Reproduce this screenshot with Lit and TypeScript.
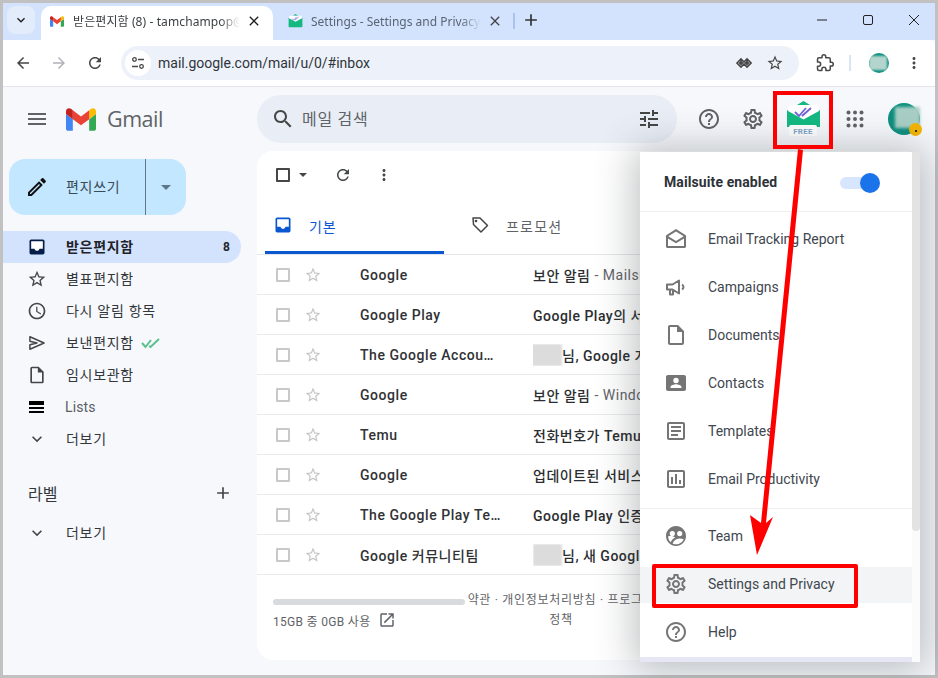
import { LitElement, html, css, svg } from "lit";
import { customElement } from "lit/decorators.js";

const P = {
  menu: "M3 18h18v-2H3v2zm0-5h18v-2H3v2zm0-7v2h18V6H3z",
  search: "M15.5 14h-.79l-.28-.27C15.41 12.59 16 11.11 16 9.5 16 5.91 13.09 3 9.5 3S3 5.91 3 9.5 5.91 16 9.5 16c1.61 0 3.09-.59 4.23-1.57l.27.28v.79l5 4.99L20.49 19l-4.99-5zm-6 0C7.01 14 5 11.99 5 9.5S7.01 5 9.5 5 14 7.01 14 9.5 11.99 14 9.5 14z",
  tune: "M3 17v2h6v-2H3zM3 5v2h10V5H3zm10 16v-2h8v-2h-8v-2h-2v6h2zM7 9v2H3v2h4v2h2V9H7zm14 4v-2H11v2h10zm-6-4h2V7h4V5h-4V3h-2v6z",
  help: "M11 18h2v-2h-2v2zm1-16C6.48 2 2 6.48 2 12s4.48 10 10 10 10-4.48 10-10S17.52 2 12 2zm0 18c-4.41 0-8-3.59-8-8s3.59-8 8-8 8 3.59 8 8-3.59 8-8 8zm0-14c-2.21 0-4 1.79-4 4h2c0-1.1.9-2 2-2s2 .9 2 2c0 2-3 1.75-3 5h2c0-2.25 3-2.5 3-5 0-2.21-1.79-4-4-4z",
  gear: "M19.43 12.98c.04-.32.07-.64.07-.98 0-.34-.03-.66-.07-.98l2.11-1.65c.19-.15.24-.42.12-.64l-2-3.46c-.09-.16-.26-.25-.44-.25-.06 0-.12.01-.17.03l-2.49 1c-.52-.4-1.08-.73-1.69-.98l-.38-2.65C14.46 2.18 14.25 2 14 2h-4c-.25 0-.46.18-.49.42l-.38 2.65c-.61.25-1.17.59-1.69.98l-2.49-1c-.06-.02-.12-.03-.18-.03-.17 0-.34.09-.43.25l-2 3.46c-.13.22-.07.49.12.64l2.11 1.65c-.04.32-.07.65-.07.98 0 .33.03.66.07.98l-2.11 1.65c-.19.15-.24.42-.12.64l2 3.46c.09.16.26.25.44.25.06 0 .12-.01.17-.03l2.49-1c.52.4 1.08.73 1.69.98l.38 2.65c.03.24.24.42.49.42h4c.25 0 .46-.18.49-.42l.38-2.65c.61-.25 1.17-.59 1.69-.98l2.49 1c.06.02.12.03.18.03.17 0 .34-.09.43-.25l2-3.46c.12-.22.07-.49-.12-.64l-2.11-1.65zm-1.98-1.71c.04.31.05.52.05.73 0 .21-.02.43-.05.73l-.14 1.13.89.7 1.08.84-.7 1.21-1.27-.51-1.04-.42-.9.68c-.43.32-.84.56-1.25.73l-1.06.43-.16 1.13-.2 1.35h-1.4l-.19-1.35-.16-1.13-1.06-.43c-.43-.18-.83-.41-1.23-.71l-.91-.7-1.06.43-1.27.51-.7-1.21 1.08-.84.89-.7-.14-1.13c-.03-.31-.05-.54-.05-.74s.02-.43.05-.73l.14-1.13-.89-.7-1.08-.84.7-1.21 1.27.51 1.04.42.9-.68c.43-.32.84-.56 1.25-.73l1.06-.43.16-1.13.2-1.35h1.39l.19 1.35.16 1.13 1.06.43c.43.18.83.41 1.23.71l.91.7 1.06-.43 1.27-.51.7 1.21-1.07.85-.89.7.14 1.13zM12 8c-2.21 0-4 1.79-4 4s1.79 4 4 4 4-1.79 4-4-1.79-4-4-4zm0 6c-1.1 0-2-.9-2-2s.9-2 2-2 2 .9 2 2-.9 2-2 2z",
  star: "M22 9.24l-7.19-.62L12 2 9.19 8.63 2 9.24l5.46 4.73L5.82 21 12 17.27 18.18 21l-1.63-7.03L22 9.24zM12 15.4l-3.76 2.27 1-4.28-3.32-2.88 4.38-.38L12 6.1l1.71 4.04 4.38.38-3.32 2.88 1 4.28L12 15.4z",
  clock: "M11.99 2C6.47 2 2 6.48 2 12s4.47 10 9.99 10C17.52 22 22 17.52 22 12S17.52 2 11.99 2zM12 20c-4.42 0-8-3.58-8-8s3.58-8 8-8 8 3.58 8 8-3.58 8-8 8zm.5-13H11v6l5.25 3.15.75-1.23-4.5-2.67z",
  file: "M14 2H6c-1.1 0-1.99.9-1.99 2L4 20c0 1.1.89 2 1.99 2H18c1.1 0 2-.9 2-2V8l-6-6zm4 18H6V4h7v5h5v11z",
  expand: "M16.59 8.59L12 13.17 7.41 8.59 6 10l6 6 6-6z",
  add: "M19 13h-6v6h-2v-6H5v-2h6V5h2v6h6v2z",
  pencil: "M3 17.25V21h3.75L17.81 9.94l-3.75-3.75L3 17.25zM5.92 19H5v-.92l9.06-9.06.92.92L5.92 19zM20.71 5.63l-2.34-2.34c-.2-.2-.45-.29-.71-.29s-.51.1-.7.29l-1.83 1.83 3.75 3.75 1.83-1.83c.39-.39.39-1.02 0-1.41z",
  refresh: "M17.65 6.35C16.2 4.9 14.21 4 12 4c-4.42 0-7.99 3.58-7.99 8s3.57 8 7.99 8c3.73 0 6.84-2.55 7.73-6h-2.08c-.82 2.33-3.04 4-5.65 4-3.31 0-6-2.69-6-6s2.69-6 6-6c1.66 0 3.14.69 4.22 1.78L13 11h7V4l-2.35 2.35z",
  more: "M12 8c1.1 0 2-.9 2-2s-.9-2-2-2-2 .9-2 2 .9 2 2 2zm0 2c-1.1 0-2 .9-2 2s.9 2 2 2 2-.9 2-2-.9-2-2-2zm0 6c-1.1 0-2 .9-2 2s.9 2 2 2 2-.9 2-2-.9-2-2-2z",
  open: "M19 19H5V5h7V3H5c-1.11 0-2 .9-2 2v14c0 1.1.89 2 2 2h14c1.1 0 2-.9 2-2v-7h-2v7zM14 3v2h3.59l-9.83 9.83 1.41 1.41L19 6.41V10h2V3h-7z",
  chart: "M9 17H7v-7h2v7zm4 0h-2V7h2v10zm4 0h-2v-4h2v4zm2 2H5V5h14v14zm0-16H5c-1.1 0-2 .9-2 2v14c0 1.1.9 2 2 2h14c1.1 0 2-.9 2-2V5c0-1.1-.9-2-2-2z",
  article: "M14 17H7v-2h7v2zm3-4H7v-2h10v2zm0-4H7V7h10v2zM19 5v14H5V5h14m0-2H5c-1.1 0-2 .9-2 2v14c0 1.1.9 2 2 2h14c1.1 0 2-.9 2-2V5c0-1.1-.9-2-2-2z",
  back: "M20 11H7.83l5.59-5.59L12 4l-8 8 8 8 1.41-1.41L7.83 13H20v-2z",
  forward: "M12 4l-1.41 1.41L16.17 11H4v2h12.17l-5.58 5.59L12 20l8-8z",
  envelope: "M12 2 2.2 8.2C2.1 8.3 2 8.5 2 8.7V19.5c0 .8.7 1.5 1.5 1.5h17c.8 0 1.5-.7 1.5-1.5V8.7c0-.2-.1-.4-.2-.5L12 2zm0 2.4 7.7 4.8L12 13.9 4.3 9.2 12 4.4zM4 19V11.4l8 4.9 8-4.9V19H4z",
  contact: "M20 4H4c-1.1 0-2 .9-2 2v12c0 1.1.9 2 2 2h16c1.1 0 2-.9 2-2V6c0-1.1-.9-2-2-2zm-8 2.8a2.7 2.7 0 1 1 0 5.4 2.7 2.7 0 0 1 0-5.4zM17.5 17h-11v-.9c0-1.8 3.7-2.8 5.5-2.8s5.5 1 5.5 2.8v.9z",
  team: "M12 2C6.48 2 2 6.48 2 12s4.48 10 10 10 10-4.48 10-10S17.52 2 12 2zM8.3 7a2.6 2.6 0 1 1 0 5.2A2.6 2.6 0 0 1 8.3 7zm7.4 0a2.6 2.6 0 1 1 0 5.2 2.6 2.6 0 0 1 0-5.2zM4 12.6c1.2-.5 2.9-.6 4.3-.4 1.2.1 2.3.6 3 1.2-1.9.8-3.7 2.5-4.6 4.8A8 8 0 0 1 4 12.6zm4.6 6.8c1-2.4 3.4-4.5 6.6-4.8 1.6-.1 3.2.1 4.6.7A8 8 0 0 1 8.6 19.4z",
  chev: "M7.41 8.59L12 13.17l4.59-4.58L18 10l-6 6-6-6z",
  close: "M19 6.41 17.59 5 12 10.59 6.41 5 5 6.41 10.59 12 5 17.59 6.41 19 12 13.41 17.59 19 19 17.59 13.41 12z",
  puzzle: "M20.5 11H19V7c0-1.1-.9-2-2-2h-4V3.5C13 2.12 11.88 1 10.5 1S8 2.12 8 3.5V5H4c-1.1 0-1.99.9-1.99 2v3.8H3.5c1.49 0 2.7 1.21 2.7 2.7s-1.21 2.7-2.7 2.7H2V20c0 1.1.9 2 2 2h3.8v-1.5c0-1.49 1.21-2.7 2.7-2.7 1.49 0 2.7 1.21 2.7 2.7V22H17c1.1 0 2-.9 2-2v-4h1.5c1.38 0 2.5-1.12 2.5-2.5S21.88 11 20.5 11z",
};

const S = {
  send: "M3.500 4.500 L20.500 12 L3.500 19.500 L3.500 14 L12 12 L3.500 10 Z",
  campaign: "M3 9.500h5.500L15 5.500v13L8.500 14.500H3z M6 15v4.500h3V15 M18 9.500c1 .6 1.500 1.500 1.500 2.500s-.5 1.900-1.500 2.500",
};

const ic = (d: string, size: number, color = "#444746") =>
  html`<svg class="ic" width=${size} height=${size} viewBox="0 0 24 24" fill=${color}><path d=${d}></path></svg>`;

const stroked = (d: string, size: number, color: string, w = 2) =>
  html`<svg class="ic" width=${size} height=${size} viewBox="0 0 24 24" fill="none" stroke=${color} stroke-width=${w} stroke-linejoin="round"><path d=${d}></path></svg>`;

const inboxIc = (size: number, color: string) =>
  html`<svg class="ic" width=${size} height=${size} viewBox="0 0 24 24"><rect x="3" y="3" width="18" height="18" rx="2" fill=${color}></rect><path fill="#fff" d="M5 5.200h14V14h-4c-.3 1.500-1.500 2.500-3 2.500S9.300 15.500 9 14H5z"></path></svg>`;

const gmailLogo = (w: number, h: number) =>
  html`<svg class="ic" width=${w} height=${h} viewBox="52 42 88 66"><path fill="#4285f4" d="M58 108h14V74L52 59v43c0 3.32 2.69 6 6 6"></path><path fill="#34a853" d="M120 108h14c3.32 0 6-2.69 6-6V59l-20 15"></path><path fill="#fbbc04" d="M120 48v26l20-15v-8c0-7.42-8.47-11.65-14.4-7.2"></path><path fill="#ea4335" d="M72 74V48l24 18 24-18v26L96 92"></path><path fill="#c5221f" d="M52 51v8l20 15V48l-5.6-4.2c-5.94-4.45-14.4-.22-14.4 7.2"></path></svg>`;

const mailsuite = (w: number, h: number, badge: boolean) =>
  html`<svg class="ic" width=${w} height=${h} viewBox="0 0 33 36">
    <path fill="#13b981" d="M16.500 0 L23 4 H10 Z"></path>
    <path fill="#13b981" d="M0 9 L16.500 17 L33 9 V26 H0 Z"></path>
    <path fill="#fff" d="M1 8 Q1 4 5 4 H28 Q32 4 32 8 V10 L16.500 18.500 L1 10 Z"></path>
    <path fill="none" stroke="#6f63d8" stroke-width="1.800" d="M8 11 l4 4 L19 7 M15 15 L24 7"></path>
    ${badge
      ? svg`<rect x="2" y="24" width="28" height="11" rx="2" fill="#fff"></rect>
            <text class="freetxt" x="16" y="32.500" text-anchor="middle">FREE</text>`
      : svg`<rect x="0" y="24" width="33" height="8" rx="2" fill="#13b981"></rect>`}
  </svg>`;

const nav = [
  { t: "받은편지함", d: "", sel: true, n: "8" },
  { t: "별표편지함", d: P.star },
  { t: "다시 알림 항목", d: P.clock },
  { t: "보낸편지함", d: "send", check: true },
  { t: "임시보관함", d: P.file },
  { t: "Lists", d: "lists", latin: true },
  { t: "더보기", d: P.expand },
];

const rows = [
  { from: "Google", subj: "보안 알림", snip: " - Mailsuite" },
  { from: "Google Play", subj: "Google Play의 서비스 약관", snip: "" },
  { from: "The Google Accou…", blur: "wide", subj: "님, Google 계정", snip: "" },
  { from: "Google", subj: "보안 알림", snip: " - Windows" },
  { from: "Temu", subj: "전화번호가 Temu", snip: "" },
  { from: "Google", subj: "업데이트된 서비스 약관", snip: "" },
  { from: "The Google Play Te…", subj: "Google Play 인증", snip: "" },
  { from: "Google 커뮤니티팀", blur: "narrow", subj: "님, 새 Google", snip: "" },
];

const menuA = [
  { t: "Email Tracking Report", d: P.envelope },
  { t: "Campaigns", d: "campaign" },
  { t: "Documents", d: P.file },
  { t: "Contacts", d: P.contact },
  { t: "Templates", d: P.article },
  { t: "Email Productivity", d: P.chart },
];
const menuB = [
  { t: "Team", d: P.team },
  { t: "Settings and Privacy", d: P.gear, hover: true },
  { t: "Help", d: P.help },
];

@customElement("app-root")
export class AppRoot extends LitElement {
  static styles = css`
    :host {
      display: block;
      position: relative;
      width: 938px;
      height: 678px;
      box-sizing: border-box;
      padding: 3px;
      background: #c1c1c1;
      overflow: hidden;
      font-family: "Roboto", "Noto Sans CJK KR", sans-serif;
      color: #202124;
    }
    .ic { display: block; flex: none; }
    .freetxt { font-family: "Roboto", sans-serif; font-size: 8px; font-weight: 700; fill: #7fa6cc; letter-spacing: .3px; }
    .window { height: 100%; display: flex; flex-direction: column; background: #f6f8fc; overflow: hidden; }

    /* tab strip */
    .tabs { height: 37px; flex: none; background: #d3e3fd; display: flex; align-items: flex-end; padding-left: 4px; box-sizing: border-box; font-family: "Noto Sans", "Noto Sans CJK KR", sans-serif; }
    .tabsearch { width: 28px; height: 28px; margin-bottom: 6px; border-radius: 8px; background: #e3ecfb; display: flex; align-items: center; justify-content: center; }
    .tab { height: 34px; display: flex; align-items: center; box-sizing: border-box; font-size: 12px; position: relative; }
    .tab.active { width: 232px; margin-left: 6px; background: #fff; border-radius: 10px 10px 0 0; padding: 0 11px 4px 9px; color: #3c4043; }
    .tab.other { width: 223px; margin-left: 7px; padding: 0 0 4px 7px; color: #5a6472; }
    .tab .title { flex: 1; min-width: 0; margin-left: 9px; white-space: nowrap; overflow: hidden; letter-spacing: .1px; -webkit-mask-image: linear-gradient(90deg, #000 88%, transparent); mask-image: linear-gradient(90deg, #000 88%, transparent); }
    .tab.other .title { margin-left: 7px; letter-spacing: 0; }
    .tabclose { margin-left: 6px; }
    .tabsep { width: 2px; height: 16px; margin: 0 0 11px 10px; background: #a8c4ec; align-self: flex-end; }
    .newtab { margin: 0 0 10px 6px; }
    .winctl { margin-left: auto; display: flex; align-items: center; align-self: flex-start; margin-top: 11px; }
    .winbtn { width: 46px; display: flex; justify-content: center; }
    .winbtn.last { margin-right: -2px; }

    /* toolbar */
    .toolbar { height: 47px; flex: none; background: #fff; border-bottom: 1px solid #e3e5e8; box-sizing: border-box; border-top-right-radius: 6px; display: flex; align-items: center; padding-left: 2px; }
    .tb { width: 36px; display: flex; justify-content: center; }
    .omni { width: 678px; height: 34px; margin-left: 8px; border-radius: 17px; background: #edf2fa; display: flex; align-items: center; padding: 0 15px 0 4px; box-sizing: border-box; }
    .omni .tune { width: 26px; height: 26px; border-radius: 50%; background: #fff; display: flex; align-items: center; justify-content: center; }
    .url { flex: 1; margin-left: 7px; font-size: 14px; color: #30343a; }
    .omni .gap { width: 14px; }
    .ext { margin-left: 10px; width: 32px; display: flex; justify-content: center; }
    .tbsep { width: 2px; height: 16px; background: #d9e4f4; margin: 0 18px 0 8px; }
    .tbavatar { width: 20px; height: 20px; border-radius: 50%; background: #0e8f7f; position: relative; overflow: hidden; }
    .tbavatar::after { content: ""; position: absolute; left: 0; right: 2px; top: 3px; bottom: 3px; background: #b4d5cd; filter: blur(1px); }
    .tbmore { margin-left: 16px; }

    /* gmail header */
    .header { height: 64px; flex: none; display: flex; align-items: center; position: relative; }
    .hleft { width: 254px; flex: none; display: flex; align-items: center; padding-left: 22px; box-sizing: border-box; }
    .logo { margin-left: 17px; }
    .wordmark { margin: -2px 0 0 11px; font-family: "Open Sans", "Roboto", sans-serif; font-size: 21.500px; color: #5f6368; letter-spacing: -.5px; }
    .search { width: 420px; height: 48px; border-radius: 24px; background: #e9eef6; display: flex; align-items: center; padding: 0 16px 0 14px; box-sizing: border-box; }
    .search .ph { flex: 1; margin: -2px 0 0 7px; font-size: 16px; color: #5f6368; letter-spacing: .7px; }
    .hright { display: flex; align-items: center; margin-left: 20px; }
    .hbtn { width: 24px; display: flex; justify-content: center; }
    .hbtn + .hbtn { margin-left: 20px; }
    .hms { margin-left: 22px; }
    .happs { margin-left: 23px; }
    .havatar { margin-left: 21px; width: 32px; height: 32px; border-radius: 50%; background: #0e8f7f; position: relative; }
    .havatar .blur { position: absolute; left: 7px; top: 4px; width: 25px; height: 21px; background: #a9cfc5; filter: blur(1.500px); }
    .havatar .dot { position: absolute; right: -2px; bottom: -1px; width: 13px; height: 13px; border-radius: 50%; background: #f4b400; display: flex; align-items: center; justify-content: center; }
    .havatar .dot::after { content: ""; width: 2px; height: 2px; background: #333; margin-top: 3px; }

    .body { flex: 1; min-height: 0; display: flex; }

    /* sidebar */
    .side { width: 254px; flex: none; color: #202124; }
    .compose { margin: 8px 0 0 6px; width: 177px; height: 56px; background: #c2e7ff; border-radius: 16px; display: flex; align-items: center; box-sizing: border-box; }
    .compose .main { width: 137px; flex: none; height: 100%; display: flex; align-items: center; padding-left: 16px; box-sizing: border-box; border-right: 1px solid #5f7787; }
    .compose .lbl { margin: -2px 0 0 17px; font-size: 14px; color: #3a4a54; letter-spacing: .7px; }
    .compose .drop { flex: 1; display: flex; justify-content: center; }
    .caret { width: 0; height: 0; border-left: 5px solid transparent; border-right: 5px solid transparent; border-top: 5px solid #5f7787; }
    .navlist { margin-top: 16px; width: 238px; }
    .nav { height: 32px; display: flex; align-items: center; padding-left: 24px; box-sizing: border-box; font-size: 14px; color: #33373b; }
    .nav.sel { background: #d3e3fd; border-radius: 0 16px 16px 0; font-weight: 700; color: #1f2329; }
    .nav .t { margin: -2px 0 0 19px; letter-spacing: .7px; }
    .nav .t.latin { margin: 0 0 0 18px; color: #5b5f63; letter-spacing: .1px; }
    .nav .n { margin-left: auto; margin-right: 11px; font-size: 12px; font-weight: 700; }
    .nav .checks { margin-left: 7px; }
    .labels { margin-top: 22px; height: 32px; display: flex; align-items: center; justify-content: space-between; padding: 0 8px 0 25px; box-sizing: border-box; font-size: 16px; width: 238px; color: #33373b; }
    .navmore { margin-top: 8px; }
    .lists { width: 15px; margin: 0 3px 0 2px; display: flex; flex-direction: column; gap: 2px; }
    .lists i { display: block; height: 2px; background: #000; }
    .lists i:first-child { height: 4px; }

    /* main */
    .panel { width: 663px; height: 509px; flex: none; background: #fff; border-radius: 16px; position: relative; overflow: hidden; }
    .actions { height: 48px; display: flex; align-items: center; padding-left: 19px; box-sizing: border-box; }
    .cb { width: 14px; height: 14px; box-sizing: border-box; border-radius: 1px; border: 2px solid #c9c9c9; flex: none; }
    .actions .cb { border-color: #444746; }
    .actions .caret { margin-left: 9px; border-top-color: #444746; border-left-width: 4px; border-right-width: 4px; border-top-width: 4px; }
    .actions .r { margin-left: 27px; }
    .actions .m { margin-left: 23px; }
    .cats { height: 56px; display: flex; box-sizing: border-box; border-bottom: 1px solid #e4e6e9; }
    .cat { width: 179px; margin-left: 8px; height: 100%; box-sizing: border-box; display: flex; align-items: center; padding: 0 0 0 8px; font-size: 14px; color: #0b57d0; border-bottom: 3px solid #0b57d0; margin-bottom: -1px; letter-spacing: .8px; }
    .cat .t { margin: 2px 0 0 16px; }
    .cat.off { width: auto; margin-left: 26px; border-bottom: none; color: #5f6368; padding: 0 0 3px 0; letter-spacing: 1.200px; }
    .row { height: 40px; display: flex; align-items: center; box-sizing: border-box; border-bottom: 1px solid #e8eaed; font-size: 14px; padding-left: 19px; }
    .star { margin-left: 14px; width: 18px; }
    .from { margin-left: 38px; width: 173px; flex: none; font-weight: 500; color: #303235; white-space: nowrap; overflow: hidden; letter-spacing: .55px; }
    .subj { white-space: nowrap; overflow: hidden; flex: 1; display: flex; align-items: center; font-weight: 500; color: #2b2d30; letter-spacing: .5px; }
    .subj .snip { color: #5f6368; font-weight: 400; white-space: pre; }
    .redact { width: 29px; height: 22px; flex: none; background: #dcdcdc; filter: blur(1.200px); }
    .redact.wide { width: 33px; margin-left: -4px; }
    .foot { display: flex; padding: 0 0 0 16px; }
    .usage { width: 192px; flex: none; padding-top: 24px; }
    .bar { height: 6px; border-radius: 3px; background: #d9dadd; }
    .usetext { margin-top: 6px; display: flex; align-items: center; font-size: 12px; color: #5f6368; letter-spacing: .3px; }
    .usetext .ic { margin-left: 8px; }
    .terms { width: 192px; flex: none; margin-left: 0; padding-top: 15px; text-align: center; font-size: 12px; line-height: 20px; color: #5f6368; letter-spacing: .7px; }

    /* popup */
    .popup { position: absolute; left: 640px; top: 152px; width: 280px; height: 510px; background: #fff; box-shadow: 0 2px 36px 6px rgba(60, 64, 67, .32); display: flex; }
    .pcol { width: 272px; flex: none; display: flex; flex-direction: column; }
    .pscroll { flex: 1; position: relative; background: #fbfbfb; }
    .pthumb { height: 379px; background: #e3e3e3; border-radius: 0 0 4px 4px; }
    .phead { height: 60px; flex: none; display: flex; align-items: center; padding-left: 24px; box-sizing: border-box; border-bottom: 1px solid #eeeff1; }
    .phead b { font-size: 14px; font-weight: 700; color: #2d3238; letter-spacing: .1px; }
    .toggle { position: relative; margin-left: auto; margin-right: 34px; width: 38px; height: 12px; border-radius: 6px; background: #d7e6fc; margin-top: 3px; }
    .toggle::after { content: ""; position: absolute; right: -2px; top: -4px; width: 20px; height: 20px; border-radius: 50%; background: #1a73e8; }
    .psec { padding-top: 3px; }
    .psec.a { height: 297px; box-sizing: border-box; border-bottom: 1px solid #eeeff1; }
    .pitem { height: 48px; display: flex; align-items: center; padding-left: 24px; box-sizing: border-box; font-size: 14px; color: #3f4750; }
    .pitem.hover { position: relative; }
    .pitem.hover::before { content: ""; position: absolute; left: 0; right: 0; top: 7px; bottom: 5px; background: #f3f4f5; }
    .pitem .ic, .pitem span { position: relative; }
    .pitem span { margin-left: 20px; }
    .pbottom { margin-top: auto; height: 5px; background: #e6e7f5; }

    /* annotations */
    .redbox { position: absolute; box-sizing: border-box; border: 4px solid #f00; }
    .redbox.top { left: 773px; top: 91px; width: 60px; height: 58px; }
    .redbox.set { left: 652px; top: 564px; width: 206px; height: 44px; border-radius: 2px; }
    .arrow { position: absolute; left: 0; top: 0; pointer-events: none; }
  `;

  render() {
    return html`
      <div class="window">
        <div class="tabs">
          <div class="tabsearch">${ic(P.chev, 16, "#1f1f1f")}</div>
          <div class="tab active">
            ${gmailLogo(14, 11)}
            <div class="title">받은편지함 (8) - tamchampop@gmail.com</div>
            <div class="tabclose">${ic(P.close, 16, "#1f1f1f")}</div>
          </div>
          <div class="tab other">
            ${mailsuite(17, 15, false)}
            <div class="title">Settings - Settings and Privacy</div>
            <div class="tabclose">${ic(P.close, 16, "#444")}</div>
          </div>
          <div class="tabsep"></div>
          <div class="newtab">${ic(P.add, 20, "#333")}</div>
          <div class="winctl">
            <div class="winbtn"><svg class="ic" width="12" height="12" viewBox="0 0 12 12"><path d="M1 6h10" stroke="#222" stroke-width="1"></path></svg></div>
            <div class="winbtn"><svg class="ic" width="12" height="12" viewBox="0 0 12 12"><rect x="1.500" y="1.500" width="9" height="9" rx="1.500" fill="none" stroke="#222"></rect></svg></div>
            <div class="winbtn last"><svg class="ic" width="12" height="12" viewBox="0 0 12 12"><path d="M1 1l10 10M11 1 1 11" stroke="#222"></path></svg></div>
          </div>
        </div>

        <div class="toolbar">
          <div class="tb">${ic(P.back, 18, "#474747")}</div>
          <div class="tb">${ic(P.forward, 18, "#b0b3b8")}</div>
          <div class="tb">${ic(P.refresh, 18, "#474747")}</div>
          <div class="omni">
            <div class="tune"><svg class="ic" width="16" height="16" viewBox="0 0 16 16" fill="none" stroke="#474747" stroke-width="1.300"><circle cx="4.500" cy="4.500" r="1.800"></circle><path d="M8 4.500h6M2 11.500h6"></path><circle cx="11.500" cy="11.500" r="1.800"></circle></svg></div>
            <div class="url">mail.google.com/mail/u/0/#inbox</div>
            <svg class="ic" width="16" height="16" viewBox="0 0 16 16"><path fill="none" stroke="#474747" stroke-width="1.600" d="M1 8l4-4 3 3 3-3 4 4-4 4-3-3-3 3z"></path><path fill="#474747" d="M5 5.500 7.500 8 5 10.500 2.500 8zM11 5.500 13.500 8 11 10.500 8.500 8z"></path></svg>
            <div class="gap"></div>
            ${ic(P.star, 18, "#474747")}
          </div>
          <div class="ext">${stroked(P.puzzle, 18, "#474747")}</div>
          <div class="tbsep"></div>
          <div class="tbavatar"></div>
          <div class="tbmore">${ic(P.more, 18, "#474747")}</div>
        </div>

        <div class="header">
          <div class="hleft">
            ${ic(P.menu, 24, "#5f6368")}
            <div class="logo">${gmailLogo(30, 23)}</div>
            <div class="wordmark">Gmail</div>
          </div>
          <div class="search">
            ${ic(P.search, 24, "#444746")}
            <div class="ph">메일 검색</div>
            ${ic(P.tune, 24, "#444746")}
          </div>
          <div class="hright">
            <div class="hbtn">${ic(P.help, 24, "#5f6368")}</div>
            <div class="hbtn">${ic(P.gear, 24, "#5f6368")}</div>
            <div class="hms">${mailsuite(33, 36, true)}</div>
            <div class="happs"><svg class="ic" width="24" height="24" viewBox="0 0 24 24" fill="#5f6368">${[5.5, 12, 18.5].map((y) => [5.5, 12, 18.5].map((x) => svg`<circle cx=${x} cy=${y} r="2"></circle>`))}</svg></div>
            <div class="havatar"><div class="blur"></div><div class="dot"></div></div>
          </div>
        </div>

        <div class="body">
          <div class="side">
            <div class="compose">
              <div class="main">${ic(P.pencil, 24, "#111")}<span class="lbl">편지쓰기</span></div>
              <div class="drop"><div class="caret"></div></div>
            </div>
            <div class="navlist">
              ${nav.map(
                (n) => html`<div class="nav ${n.sel ? "sel" : ""}">
                  ${n.sel
                    ? inboxIc(20, "#041e49")
                    : n.d === "lists"
                      ? html`<div class="lists"><i></i><i></i><i></i></div>`
                      : n.d === "send"
                        ? stroked(S.send, 20, "#444746", 1.8)
                        : ic(n.d, 20, "#444746")}
                  <span class="t ${n.latin ? "latin" : ""}">${n.t}</span>
                  ${n.check
                    ? html`<svg class="ic checks" width="20" height="12" viewBox="0 0 20 12" fill="none" stroke="#5ac18e" stroke-width="2"><path d="M1 6l3.500 4L10 3M8 9l1.500 1L18 2"></path></svg>`
                    : ""}
                  ${n.n ? html`<span class="n">${n.n}</span>` : ""}
                </div>`
              )}
            </div>
            <div class="labels"><span>라벨</span>${ic(P.add, 20, "#444746")}</div>
            <div class="nav navmore">${ic(P.expand, 20, "#444746")}<span class="t">더보기</span></div>
          </div>

          <div class="panel">
            <div class="actions">
              <div class="cb"></div>
              <div class="caret"></div>
              <div class="r">${ic(P.refresh, 18, "#444746")}</div>
              <div class="m">${ic(P.more, 18, "#444746")}</div>
            </div>
            <div class="cats">
              <div class="cat">${inboxIc(20, "#0b57d0")}<span class="t">기본</span></div>
              <div class="cat off">
                <svg class="ic" width="20" height="20" viewBox="0 0 20 20" fill="none" stroke="#444746" stroke-width="1.500"><path d="M3 3h7l7.500 7.500-6.500 6.500L3.500 9.500z" stroke-linejoin="round"></path><circle cx="6" cy="6" r=".6" fill="#444746"></circle></svg>
                <span class="t">프로모션</span>
              </div>
            </div>
            ${rows.map(
              (r) => html`<div class="row">
                <div class="cb"></div>
                <div class="star">${ic(P.star, 18, "#c6c6c6")}</div>
                <div class="from">${r.from}</div>
                <div class="subj">${r.blur ? html`<div class="redact ${r.blur}"></div>` : ""}${r.subj}<span class="snip">${r.snip}</span></div>
              </div>`
            )}
            <div class="foot">
              <div class="usage">
                <div class="bar"></div>
                <div class="usetext">15GB 중 0GB 사용${ic(P.open, 18, "#5f6368")}</div>
              </div>
              <div class="terms">약관 · 개인정보처리방침 · 프로그램 정책</div>
            </div>
          </div>
        </div>
      </div>

      <div class="popup">
        <div class="pcol">
          <div class="phead"><b>Mailsuite enabled</b><div class="toggle"></div></div>
          <div class="psec a">
            ${menuA.map(
              (m) => html`<div class="pitem">${m.d === "campaign" ? stroked(S.campaign, 24, "#757575") : ic(m.d, 24, "#757575")}<span>${m.t}</span></div>`
            )}
          </div>
          <div class="psec b">
            ${menuB.map((m) => html`<div class="pitem ${m.hover ? "hover" : ""}">${ic(m.d, 24, "#757575")}<span>${m.t}</span></div>`)}
          </div>
          <div class="pbottom"></div>
        </div>
        <div class="pscroll"><div class="pthumb"></div></div>
      </div>

      <div class="redbox top"></div>
      <div class="redbox set"></div>
      <svg class="arrow" width="938" height="678" viewBox="0 0 938 678">
        <path fill="#f00" d="M798 149 L803 150 L766 523 L773 517 L757 555 L750 515 L761 523 Z"></path>
      </svg>
    `;
  }
}
